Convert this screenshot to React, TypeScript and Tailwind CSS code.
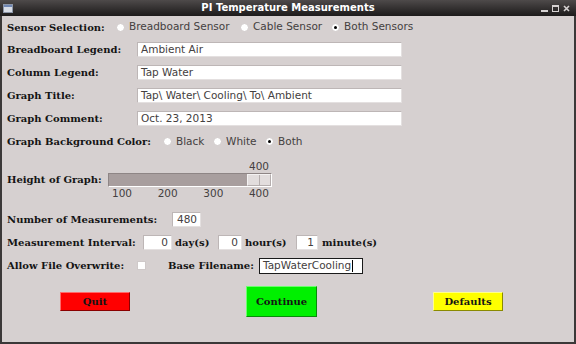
import React from 'react';

const serif = "font-['DejaVu_Serif',serif] font-bold text-[10px] text-[#141414] whitespace-nowrap";
const sans = "font-['DejaVu_Sans',sans-serif] text-[10.5px] text-[#444040] whitespace-nowrap";

function Radio({ on = false }: { on?: boolean }) {
  return (
    <span className="w-[9px] h-[9px] rounded-full bg-white border border-[#cfc9c9] flex items-center justify-center shrink-0">
      {on && <span className="w-[3px] h-[3px] rounded-full bg-black" />}
    </span>
  );
}

function Option({ label, on, w }: { label: string; on?: boolean; w?: string }) {
  return (
    <div className={`flex items-center gap-[4px] ${w ?? ''}`}>
      <Radio on={on} />
      <span className={sans}>{label}</span>
    </div>
  );
}

function Entry({ value, w, right, focused }: { value: string; w: string; right?: boolean; focused?: boolean }) {
  return (
    <div
      className={`h-[15px] bg-white flex items-center px-[3px] shrink-0 ${w} ${right ? 'justify-end' : ''} ${
        focused ? 'border border-[#1a1a1a] h-[16px]' : 'border border-[#e4e0e0] border-t-[#bdb6b6] border-l-[#bdb6b6]'
      }`}
    >
      <span className={`${sans} leading-none whitespace-pre`}>{value}</span>
      {focused && <span className="w-px h-[12px] bg-black ml-[1px]" />}
    </div>
  );
}

function Row({ h = 'h-[23px]', children }: { h?: string; children: React.ReactNode }) {
  return <div className={`flex items-center ${h}`}>{children}</div>;
}

export default function App() {
  return (
    <div className="w-[576px] h-[344px] bg-[#3b3838] flex flex-col overflow-hidden">
      {/* title bar */}
      <div className="h-[16px] shrink-0 bg-gradient-to-b from-[#4e4a4a] to-[#1d1b1b] flex items-center px-[3px] relative">
        <svg width="10" height="9" viewBox="0 0 10 9">
          <rect x="0.5" y="0.5" width="9" height="8" fill="#d8dde6" stroke="#8c96a8" />
          <rect x="1" y="1" width="8" height="2" fill="#6f86b3" />
        </svg>
        <span className="absolute left-0 right-0 text-center font-['DejaVu_Sans',sans-serif] font-bold text-[10px] text-white leading-none">
          PI Temperature Measurements
        </span>
        <div className="ml-auto flex items-center gap-[4px] pr-[3px]">
          <svg width="7" height="7" viewBox="0 0 7 7"><rect x="0" y="5" width="7" height="2" fill="#d6d2d2" /></svg>
          <svg width="7" height="7" viewBox="0 0 7 7"><rect x="0.5" y="0.5" width="6" height="6" fill="none" stroke="#d6d2d2" /><rect x="0" y="0" width="7" height="2" fill="#d6d2d2" /></svg>
          <svg width="7" height="7" viewBox="0 0 7 7"><path d="M1 1 L6 6 M6 1 L1 6" stroke="#d6d2d2" strokeWidth="1.6" /></svg>
        </div>
      </div>

      {/* body */}
      <div className="flex-1 bg-[#d6d0d0] mx-[2px] mb-[2px] pl-[5px] flex flex-col">
        <Row h="h-[22px]">
          <span className={`${serif} w-[109px]`}>Sensor Selection:</span>
          <Option label="Breadboard Sensor" w="w-[124px]" />
          <Option label="Cable Sensor" w="w-[91px]" />
          <Option label="Both Sensors" on />
        </Row>
        <Row>
          <span className={`${serif} w-[130px]`}>Breadboard Legend:</span>
          <Entry value="Ambient Air" w="w-[265px]" />
        </Row>
        <Row>
          <span className={`${serif} w-[130px]`}>Column Legend:</span>
          <Entry value="Tap Water" w="w-[265px]" />
        </Row>
        <Row>
          <span className={`${serif} w-[130px]`}>Graph Title:</span>
          <Entry value="Tap\ Water\ Cooling\ To\ Ambient" w="w-[265px]" />
        </Row>
        <Row>
          <span className={`${serif} w-[130px]`}>Graph Comment:</span>
          <Entry value="Oct. 23, 2013" w="w-[265px]" />
        </Row>
        <Row>
          <span className={`${serif} w-[156px]`}>Graph Background Color:</span>
          <Option label="Black" w="w-[50px]" />
          <Option label="White" w="w-[52px]" />
          <Option label="Both" on />
        </Row>

        {/* slider */}
        <div className="h-[55px] flex items-start pt-[7px]">
          <span className={`${serif} w-[101px] mt-[13px] leading-[14px]`}>Height of Graph:</span>
          <div className="w-[164px] flex flex-col">
            <div className={`${sans} h-[12px] leading-[12px] flex justify-end pr-[3px]`}>400</div>
            <div className="mt-[1px] h-[14px] bg-[#a89e9e] border border-[#8e8585] border-b-white border-r-white flex justify-end">
              <div className="w-[24px] h-full bg-[#e2dddd] border border-[#f4f2f2] border-r-[#b5aeae] border-b-[#b5aeae] flex justify-center">
                <div className="w-px h-full bg-[#b5aeae]" />
              </div>
            </div>
            <div className={`${sans} h-[12px] leading-[12px] flex justify-between pl-[4px] pr-[3px]`}>
              <span>100</span>
              <span>200</span>
              <span>300</span>
              <span>400</span>
            </div>
          </div>
        </div>

        <Row>
          <span className={`${serif} w-[165px]`}>Number of Measurements:</span>
          <Entry value="480" w="w-[29px]" right />
        </Row>
        <Row>
          <span className={`${serif} w-[136px]`}>Measurement Interval:</span>
          <Entry value="0" w="w-[29px]" right />
          <span className={`${serif} w-[46px] pl-[3px]`}>day(s)</span>
          <Entry value="0" w="w-[24px]" right />
          <span className={`${serif} w-[54px] pl-[3px]`}>hour(s)</span>
          <Entry value="1" w="w-[22px]" right />
          <span className={`${serif} pl-[4px]`}>minute(s)</span>
        </Row>
        <Row>
          <span className={`${serif} w-[130px]`}>Allow File Overwrite:</span>
          <span className="w-[9px] h-[9px] bg-white border border-[#cfc9c9] shrink-0" />
          <span className={`${serif} ml-[22px] w-[91px]`}>Base Filename:</span>
          <Entry value="TapWaterCooling" w="w-[104px]" focused />
        </Row>

        {/* buttons */}
        <div className="flex items-center h-[31px] mt-[9px]">
          <button className={`${serif} ml-[53px] w-[70px] h-[19px] bg-[#ff0000] border border-[#ff6a6a] border-r-[#8a0000] border-b-[#8a0000] text-[#2a0000]`}>
            Quit
          </button>
          <button className={`${serif} ml-[116px] w-[71px] h-[31px] bg-[#00f000] border border-[#6cff6c] border-r-[#0a8a0a] border-b-[#0a8a0a]`}>
            Continue
          </button>
          <button className={`${serif} ml-[116px] w-[70px] h-[19px] bg-[#ffff00] border border-[#ffff8a] border-r-[#8a8a00] border-b-[#8a8a00]`}>
            Defaults
          </button>
        </div>
      </div>
    </div>
  );
}
